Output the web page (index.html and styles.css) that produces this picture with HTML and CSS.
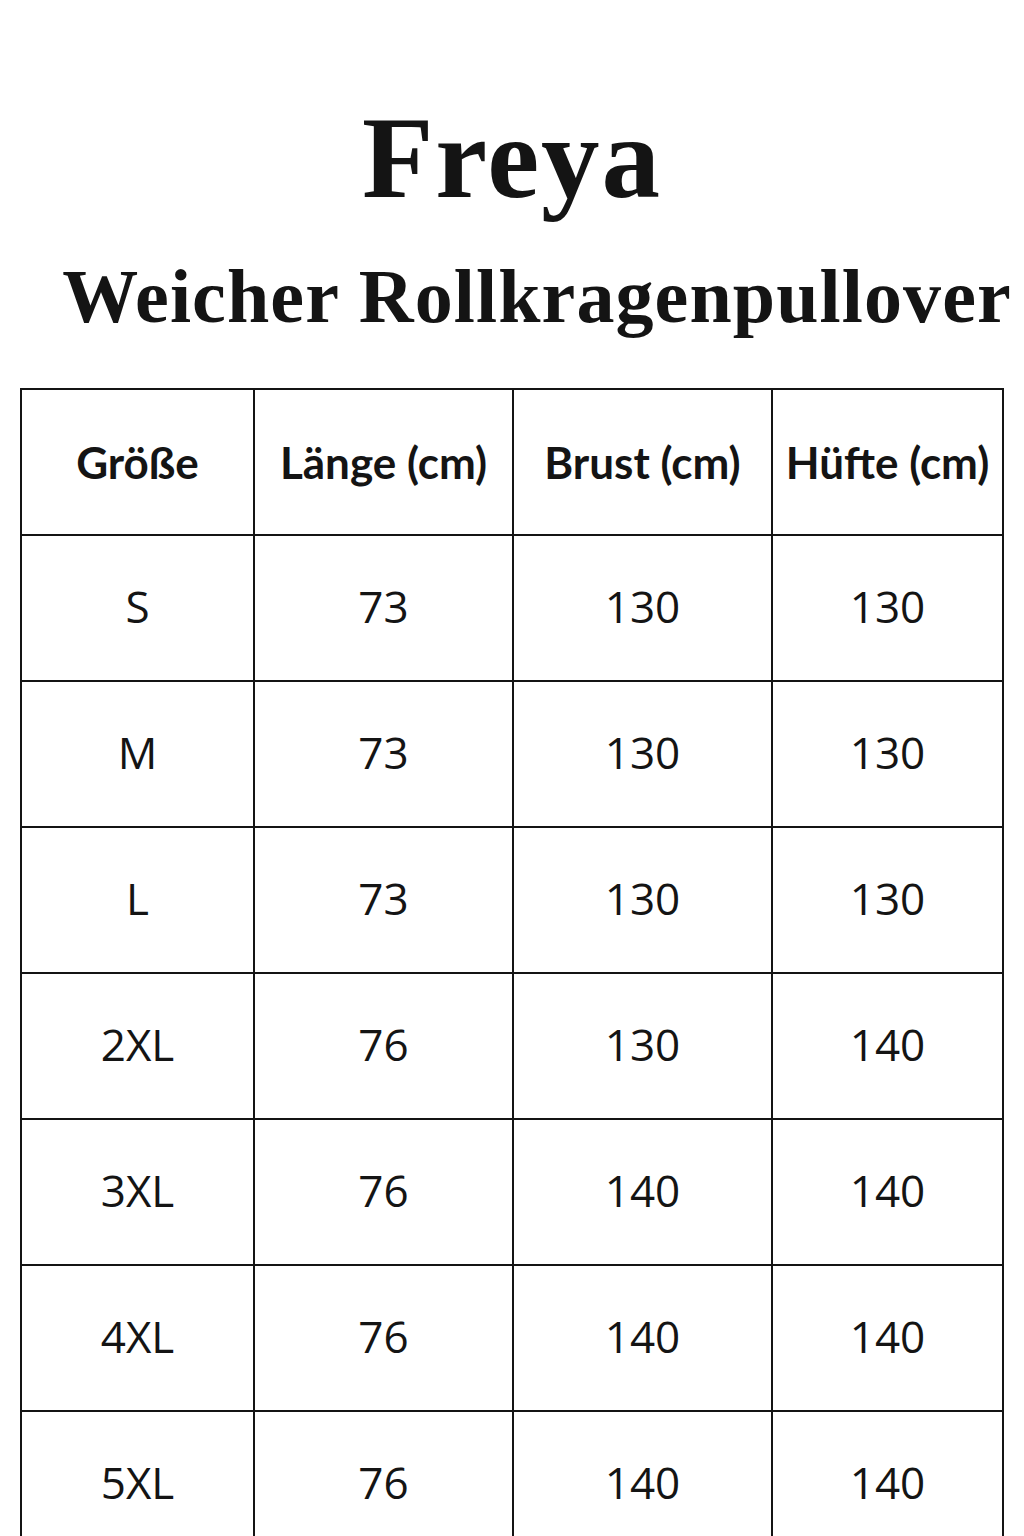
FILE: index.html
```html
<!DOCTYPE html>
<html lang="de">
<head>
<meta charset="utf-8">
<title>Freya – Größentabelle</title>
<link rel="stylesheet" href="styles.css">
</head>
<body>
<header class="head">
  <h1 class="brand">Freya</h1>
  <h2 class="product">Weicher Rollkragenpullover</h2>
</header>
<table class="sizes">
  <colgroup>
    <col class="c1"><col class="c2"><col class="c3"><col class="c4">
  </colgroup>
  <thead>
    <tr><th>Größe</th><th>Länge (cm)</th><th>Brust (cm)</th><th>Hüfte (cm)</th></tr>
  </thead>
  <tbody>
    <tr><td>S</td><td>73</td><td>130</td><td>130</td></tr>
    <tr><td>M</td><td>73</td><td>130</td><td>130</td></tr>
    <tr><td>L</td><td>73</td><td>130</td><td>130</td></tr>
    <tr><td>2XL</td><td>76</td><td>130</td><td>140</td></tr>
    <tr><td>3XL</td><td>76</td><td>140</td><td>140</td></tr>
    <tr><td>4XL</td><td>76</td><td>140</td><td>140</td></tr>
    <tr><td>5XL</td><td>76</td><td>140</td><td>140</td></tr>
  </tbody>
</table>
</body>
</html>
```

FILE: styles.css
```css
html, body {
  margin: 0;
  padding: 0;
  background: #fff;
  color: #141414;
  overflow: hidden;
}
body {
  width: 1024px;
}
.head {
  padding-top: 100px;
  text-align: center;
  font-family: "Liberation Serif", "Times New Roman", serif;
}
.brand {
  margin: 0;
  font-size: 117px;
  line-height: 116px;
  font-weight: 700;
  letter-spacing: 2px;
}
.product {
  margin: 42px 0 0;
  padding-left: 50px;
  font-size: 76px;
  line-height: 76px;
  font-weight: 700;
  letter-spacing: 1.1px;
  white-space: nowrap;
}
.sizes {
  margin: 54px 0 0 20px;
  width: 982px;
  table-layout: fixed;
  border-collapse: collapse;
}
.c1 { width: 233px; }
.c2 { width: 259px; }
.c3 { width: 259px; }
.c4 { width: 231px; }
.sizes th,
.sizes td {
  border: 2px solid #141414;
  height: 144px;
  padding: 0;
  text-align: center;
  vertical-align: middle;
}
.sizes th {
  font-family: Lato, "Open Sans", sans-serif;
  font-weight: 700;
  font-size: 44px;
  white-space: nowrap;
}
.sizes td {
  font-family: "Open Sans", "Noto Sans", sans-serif;
  font-weight: 400;
  font-size: 44px;
  padding-bottom: 4px;
  height: 140px;
}
```
